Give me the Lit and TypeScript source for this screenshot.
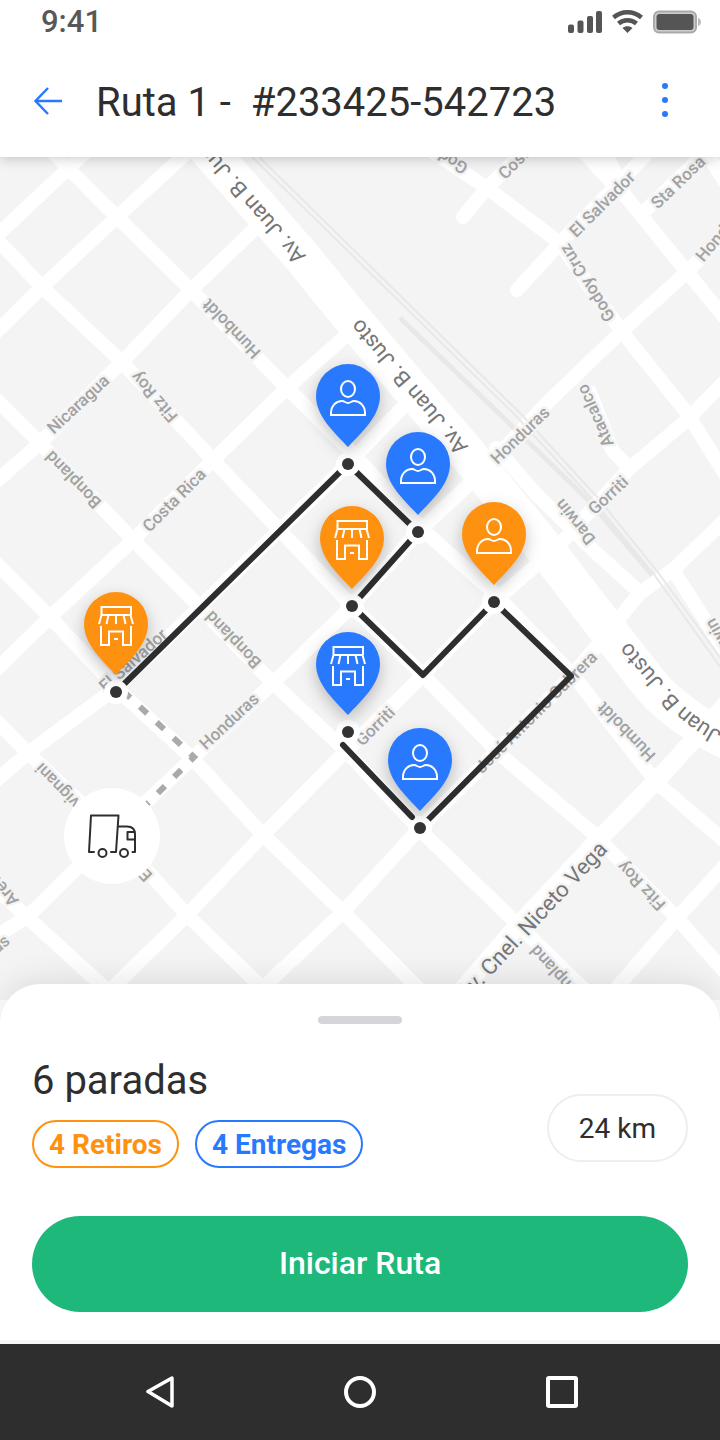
import { LitElement, html, svg, css } from "lit";
import { customElement, property } from "lit/decorators.js";

type Kind = "person" | "store";
interface Stop { x: number; y: number; dotX: number; dotY: number; kind: Kind; pickup: boolean; name: string; }
interface Label { text: string; x: number; y: number; angle: number; anchor?: "start" | "middle" | "end"; major?: boolean; onAvenue?: boolean; }

const STREETS: string[] = [
  "M50 150 L117 217 L191 290 L287 388 L348 448 L423 530 L493 592 L573 675 L657 783 L730 846",
  "M-10 232 L42 287 L122 362 L213 460 L273 523 L352 606 L423 675 L503 757 L593 833 L677 918 L730 978",
  "M-10 393 L40 443 L133 540 L190 597 L270 680 L347 752 L420 830 L510 917 L590 995",
  "M-10 557 L50 617 L116 688 L194 760 L263 835 L343 912 L430 1000",
  "M-10 714 L28 753 L113 833 L187 915 L275 1000",
  "M-10 883 L27 917 L118 1000",
  "M-10 242 L90 148",
  "M-10 338 L42 287 L117 217 L192 148",
  "M-10 487 L40 443 L122 362 L191 290 L262 222",
  "M-10 676 L50 617 L133 540 L213 460 L287 388 L350 332",
  "M-10 786 L28 753 L116 688 L348 464 L402 408",
  "M-10 940 L27 917 L113 833 L194 757 L273 683 L352 606 L418 532 L480 474 L547 403 L623 330 L687 272 L730 228",
  "M100 1000 L187 915 L263 835 L340 757 L423 675 L494 602 L560 544 L630 468 L687 420 L730 376",
  "M250 1000 L343 912 L420 828 L573 675 L640 593 L673 570 L730 515",
  "M606 1000 L677 918 L730 860",
  "M430 150 L487 188 L560 243 L592 290 L623 333 L687 413 L730 482",
  "M463 217 L487 188 L530 146",
  "M517 290 L560 243 L645 156",
  "M623 193 L687 272 L730 324",
  "M644 212 L706 152 L730 190",
  "M590 392 L612 450 L627 466",
  "M496 448 L537 495 L593 550 L637 590",
  "M673 570 L700 612 L730 660",
];
const JUNCTION = "M572 150 L612 150 L631 190 L618 200 Z";
const AVENUE = "M205 146 L263 212 L302 257 L350 316 L408 385 L460 445 L550 555 L600 620 L645 678 Q672 714 730 742";

const LABELS: Label[] = [
  { text: "Av. Juan B. Justo", x: 302, y: 260, angle: -131, anchor: "start", major: true, onAvenue: true },
  { text: "Av. Juan B. Justo", x: 410, y: 386, angle: -130, major: true, onAvenue: true },
  { text: "Av. Cnel. Niceto Vega", x: 604, y: 846, angle: -47, anchor: "end", major: true },
  { text: "Godoy Cruz", x: 466, y: 170, angle: -148, anchor: "start" },
  { text: "Costa Rica", x: 501, y: 176, angle: -45, anchor: "start" },
  { text: "El Salvador", x: 602, y: 204, angle: -45 },
  { text: "Sta Rosa", x: 678, y: 182, angle: -44 },
  { text: "Honduras", x: 699, y: 259, angle: -50, anchor: "start" },
  { text: "Godoy Cruz", x: 587, y: 283, angle: -122 },
  { text: "Atacalco", x: 595, y: 416, angle: -114 },
  { text: "Honduras", x: 520, y: 435, angle: -44 },
  { text: "Gorriti", x: 608, y: 495, angle: -43 },
  { text: "Darwin", x: 575, y: 522, angle: -129 },
  { text: "Darwin", x: 709, y: 620, angle: -120, anchor: "end" },
  { text: "Humboldt", x: 231, y: 329, angle: -134 },
  { text: "Nicaragua", x: 78, y: 404, angle: -43 },
  { text: "Fitz Roy", x: 154, y: 397, angle: -131 },
  { text: "Bonpland", x: 73, y: 480, angle: -134 },
  { text: "Costa Rica", x: 174, y: 500, angle: -45 },
  { text: "Bonpland", x: 233, y: 640, angle: -134 },
  { text: "El Salvador", x: 133, y: 660, angle: -42 },
  { text: "Honduras", x: 229, y: 721, angle: -43 },
  { text: "Gorriti", x: 375, y: 726, angle: -45 },
  { text: "Ravignani", x: 38, y: 766, angle: -134, anchor: "end" },
  { text: "E.", x: 149, y: 879, angle: -134, anchor: "start" },
  { text: "Arévalo", x: 15, y: 904, angle: -130, anchor: "start" },
  { text: "Honduras", x: 7, y: 938, angle: -40, anchor: "end" },
  { text: "José Antonio Cabrera", x: 536, y: 712, angle: -45 },
  { text: "Humboldt", x: 626, y: 732, angle: -134 },
  { text: "Fitz Roy", x: 641, y: 886, angle: -134 },
  { text: "Bonpland", x: 533, y: 948, angle: -132, anchor: "end" },
];

const STOPS: Stop[] = [
  { x: 84, y: 592, dotX: 116, dotY: 692, kind: "store", pickup: true, name: "Retiro en El Salvador" },
  { x: 316, y: 364, dotX: 348, dotY: 464, kind: "person", pickup: false, name: "Entrega en El Salvador" },
  { x: 386, y: 432, dotX: 418, dotY: 532, kind: "person", pickup: false, name: "Entrega en Humboldt" },
  { x: 320, y: 506, dotX: 352, dotY: 606, kind: "store", pickup: true, name: "Retiro en Honduras" },
  { x: 462, y: 502, dotX: 494, dotY: 602, kind: "person", pickup: true, name: "Retiro en Humboldt" },
  { x: 316, y: 632, dotX: 348, dotY: 732, kind: "store", pickup: false, name: "Entrega en Gorriti" },
  { x: 388, y: 728, dotX: 420, dotY: 828, kind: "person", pickup: false, name: "Entrega en Bonpland" },
];

@customElement("route-map")
export class RouteMap extends LitElement {
  static styles = css`
    :host { display: flex; background: #f4f4f4; }
    .map { flex: 1; width: 100%; min-height: 480px; display: block; font-family: Roboto, "Noto Sans", sans-serif; }
    .streets { fill: none; stroke: #fff; stroke-width: 14px; stroke-linecap: round; stroke-linejoin: round; }
    .avenue { fill: none; stroke: #fff; stroke-width: 38px; }
    .vega { fill: none; stroke: #fff; stroke-width: 18px; }
    .rail { fill: none; stroke: #e8e8e8; stroke-width: 2px; }
    .rail-wide { fill: none; stroke: #e8e8e8; stroke-width: 5px; }
    .label { font-size: 17px; font-weight: 500; fill: #a2a2a2; stroke: #f4f4f4; stroke-width: 5px; stroke-linejoin: round; paint-order: stroke; }
    .major { font-size: 22px; font-weight: 400; fill: #767676; }
    .on-avenue { stroke: #fff; }
    .route { fill: none; stroke: #2e2e2e; stroke-width: 6px; stroke-linejoin: round; }
    .approach { fill: none; stroke: #aaa; stroke-width: 6px; stroke-dasharray: 10 13; }
    .halo { fill: #fff; }
    .dot { fill: #333; }
    .delivery { fill: #2979ff; }
    .pickup { fill: #ff9110; }
    .pin-shadow { filter: drop-shadow(0 6px 8px rgba(0, 0, 0, 0.24)); }
    .glyph { fill: none; stroke: #fff; stroke-width: 2px; }
    .truck { fill: none; stroke: #2e2e2e; stroke-width: 2px; stroke-linecap: round; stroke-linejoin: round; }
  `;

  private label(l: Label) {
    return svg`<text class="label ${l.major ? "major" : ""} ${l.onAvenue ? "on-avenue" : ""}"
      text-anchor=${l.anchor ?? "middle"} dy="6"
      transform="translate(${l.x} ${l.y}) rotate(${l.angle})">${l.text}</text>`;
  }

  private glyph(kind: Kind) {
    return kind === "person"
      ? svg`<g class="glyph"><ellipse cx="32" cy="25" rx="7" ry="8"></ellipse>
          <path d="M15 51 H49 V49 C49 42 44 37 38 37 C35.500 37 34.500 39 32 39 C29.500 39 28.500 37 26 37 C20 37 15 42 15 49 Z"></path></g>`
      : svg`<g class="glyph"><path d="M17.500 23 V15 H47 V23 M17 23 H47.500 M17.500 23 L15 32 M24.500 23 L22.500 32 M32 23 V32 M39.500 23 L41.500 32 M46.500 23 L49 32 M17 34 V53 H25 V39.500 H39 V53 H47 V34 M30 47 H34"></path></g>`;
  }

  render() {
    return html`<svg class="map" viewBox="0 157 720 843" preserveAspectRatio="xMidYMid slice" role="img" aria-label="Mapa de la ruta">
      <g class="streets">${STREETS.map((d) => svg`<path d=${d}></path>`)}</g>
      <path class="halo" d=${JUNCTION}></path>
      <path class="vega" d="M450 1004 L510 934 L600 838 L657 780 L730 700"></path>
      <path class="avenue" d=${AVENUE}></path>
      <path class="rail" d="M247 152 L360 263 L517 417 L593 500 L653 573 L724 672"></path>
      <path class="rail" d="M252 150 L364 260 L522 415 L598 498 L657 571 L728 668"></path>
      <path class="rail-wide" d="M400 318 L512 426 L590 502 L652 575"></path>
      ${LABELS.map((l) => this.label(l))}
      <path id="justo" fill="none" d="M800 766 Q700 742 666 694 L624 645"></path>
      <text class="label major on-avenue" dy="6" text-anchor="end"><textPath href="#justo" startOffset="100%">Av. Juan B. Justo</textPath></text>
      <path class="approach" d="M123 691 L194 757 L146 805"></path>
      <path class="route" d="M116 692 L348 464 L418 532 L352 606 L423 675 L494 602 L571 676 L420 828"></path>
      ${STOPS.map((s) => svg`<circle class="halo" cx=${s.dotX} cy=${s.dotY} r="12"></circle>`)}
      <path class="route" stroke-linecap="round" d="M343 745 L412 817"></path>
      ${STOPS.map((s) => svg`<g class="pin-shadow" transform="translate(${s.x} ${s.y})" role="img" aria-label=${s.name}>
        <path class=${s.pickup ? "pickup" : "delivery"} d="M32 83 C18 68 0 52 0 32 A32 32 0 0 1 64 32 C64 52 46 68 32 83 Z"></path>
        ${this.glyph(s.kind)}</g>`)}
      ${STOPS.map((s) => svg`<circle class="dot" cx=${s.dotX} cy=${s.dotY} r="6"></circle>`)}
      <circle class="halo" cx="112" cy="836" r="48"></circle>
      <path class="truck" d="M94 852 H89 L91 815.500 H118.500 L116 852 H111 M118 826.500 H127 C132 826.500 135 829 135 834 V852 H132.500 M135 832 H127.500 V839.500 H135"></path>
      <circle class="truck" cx="102.500" cy="853" r="4"></circle>
      <circle class="truck" cx="124" cy="853" r="4"></circle>
    </svg>`;
  }
}

@customElement("app-root")
export class AppRoot extends LitElement {
  @property() time = "9:41";
  @property() routeName = "Ruta 1 -  #233425-542723";

  static styles = css`
    :host { display: flex; flex-direction: column; min-height: 100vh; background: #fff; color: #2e2e2e; font-family: Roboto, "Noto Sans", sans-serif; }
    *, *::before { box-sizing: border-box; }
    button { font: inherit; color: inherit; border: 0; background: none; padding: 0; cursor: pointer; }
    svg { display: block; }
    .top { position: relative; z-index: 1; background: #fff; box-shadow: 0 2px 12px rgba(0, 0, 0, 0.2); }
    .status { display: flex; justify-content: space-between; align-items: center; height: 44px; padding: 0 18px 0 41px; }
    .time { font-size: 31px; line-height: 44px; font-weight: 500; color: #585858; }
    .bar { display: flex; align-items: center; height: 113px; padding: 0 31px 0 32px; }
    .back { display: grid; place-items: center; width: 32px; height: 48px; }
    .title { flex: 1; margin: 0 0 0 32px; padding-top: 4px; font-size: 40px; line-height: 48px; font-weight: 400; white-space: pre-wrap; }
    .more { display: grid; place-items: center; width: 48px; height: 48px; }
    .map-area { flex: 1; }
    .sheet { position: relative; margin-top: -16px; padding: 32px 32px 28px; background: #fff; border-radius: 40px 40px 0 0; box-shadow: 0 -4px 32px rgba(0, 0, 0, 0.1); }
    .handle { display: block; width: 84px; height: 8px; margin: 0 auto 32px; border-radius: 4px; background: #d5d5da; }
    .summary { display: flex; justify-content: space-between; align-items: flex-end; margin-bottom: 48px; }
    .stops { margin: 0 0 14px; font-size: 40px; line-height: 50px; font-weight: 400; }
    .chips { display: flex; gap: 16px; }
    .chip { height: 48px; padding: 0 15px; border: 2px solid; border-radius: 24px; font-size: 28px; line-height: 46px; font-weight: 700; }
    .orange { color: #ff9110; }
    .blue { color: #2979ff; }
    .distance { margin-bottom: 6px; height: 68px; padding: 0 30px; border: 2px solid #eee; border-radius: 34px; font-size: 28px; line-height: 66px; }
    .start { display: block; width: 100%; height: 96px; padding-bottom: 2px; border-radius: 48px; background: #1eb87b; color: #fff; font-size: 32px; font-weight: 500; }
    .edge { height: 4px; background: #f7f7f7; position: relative; }
    .nav { position: relative; display: flex; justify-content: center; align-items: center; gap: 138px; height: 96px; background: #2e2e2e; }
    .nav-button { display: grid; place-items: center; width: 64px; height: 64px; }
  `;

  render() {
    return html`
      <header class="top">
        <div class="status">
          <span class="time">${this.time}</span>
          <svg width="134" height="24" viewBox="0 0 134 24" role="img" aria-label="Señal, wifi y batería" fill="#555">
            <rect x="0" y="14.500" width="6" height="8.500" rx="2"></rect>
            <rect x="9.500" y="10.500" width="6" height="12.500" rx="2"></rect>
            <rect x="19" y="6" width="6" height="17" rx="2"></rect>
            <rect x="28" y="1" width="6" height="22" rx="2"></rect>
            <g fill="none" stroke="#555" stroke-width="4.500">
              <path d="M45.500 7.500 C53.500 0.500 65.500 0.500 73.500 7.500"></path>
              <path d="M50.500 13.500 C55.500 9 63.500 9 68.500 13.500"></path>
            </g>
            <path d="M54.500 18 C57 15.500 62 15.500 64.500 18 L59.500 23 Z"></path>
            <rect x="86" y="1.500" width="42" height="21" rx="5" fill="#ccc" stroke="#aaa" stroke-width="2"></rect>
            <rect x="88.500" y="4" width="37" height="16" rx="3"></rect>
            <path d="M130 8 C134 9 134 15 130 16 Z" fill="#bbb"></path>
          </svg>
        </div>
        <div class="bar">
          <button class="back" aria-label="Volver">
            <svg width="30" height="30" viewBox="0 0 30 30" fill="none" stroke="#2979ff" stroke-width="2.500"><path d="M29 15 H3 M15 2 L2.500 15 L15 28"></path></svg>
          </button>
          <h1 class="title">${this.routeName}</h1>
          <button class="more" aria-label="Más opciones">
            <svg width="8" height="36" viewBox="0 0 8 36" fill="#2979ff"><circle cx="4" cy="3" r="3"></circle><circle cx="4" cy="17" r="3"></circle><circle cx="4" cy="31" r="3"></circle></svg>
          </button>
        </div>
      </header>
      <route-map class="map-area"></route-map>
      <section class="sheet">
        <span class="handle"></span>
        <div class="summary">
          <div>
            <h2 class="stops">6 paradas</h2>
            <div class="chips">
              <span class="chip orange">4 Retiros</span>
              <span class="chip blue">4 Entregas</span>
            </div>
          </div>
          <span class="distance">24 km</span>
        </div>
        <button class="start">Iniciar Ruta</button>
      </section>
      <div class="edge"></div>
      <nav class="nav" aria-label="Sistema">
        <button class="nav-button" aria-label="Atrás">
          <svg width="32" height="32" viewBox="0 0 32 32" fill="none" stroke="#fff" stroke-width="3.500" stroke-linejoin="round"><path d="M30 2 V30 L6 15.500 Z"></path></svg>
        </button>
        <button class="nav-button" aria-label="Inicio">
          <svg width="32" height="32" viewBox="0 0 32 32" fill="none" stroke="#fff" stroke-width="4"><circle cx="16" cy="16" r="14"></circle></svg>
        </button>
        <button class="nav-button" aria-label="Recientes">
          <svg width="32" height="32" viewBox="0 0 32 32" fill="none" stroke="#fff" stroke-width="4"><rect x="2" y="2" width="28" height="28" rx="1"></rect></svg>
        </button>
      </nav>`;
  }
}
